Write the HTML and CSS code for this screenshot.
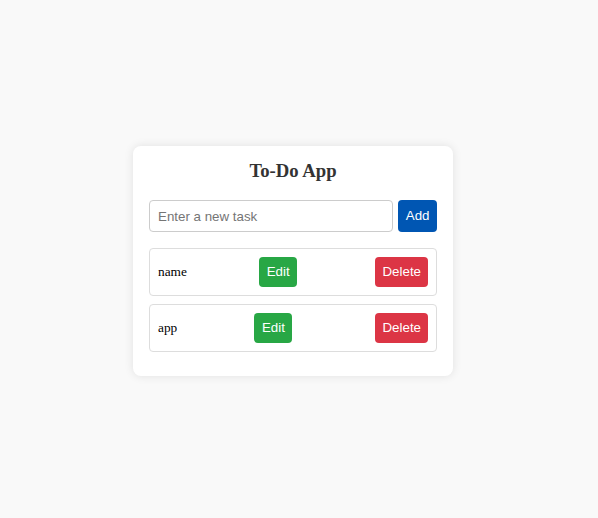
FILE: index.html
```html
<!DOCTYPE html>
<html>
<head>
<meta charset="utf-8">
<title>To-Do App</title>
<link rel="stylesheet" href="styles.css">
</head>
<body>
  <div class="card">
    <h3 class="title">To-Do App</h3>
    <div class="add-row">
      <input class="task-input" type="text" placeholder="Enter a new task">
      <button class="btn btn-add">Add</button>
    </div>
    <ul class="list">
      <li class="item"><span class="item-text">name</span><button class="btn btn-edit">Edit</button><button class="btn btn-delete">Delete</button></li>
      <li class="item"><span class="item-text">app</span><button class="btn btn-edit">Edit</button><button class="btn btn-delete">Delete</button></li>
    </ul>
  </div>
</body>
</html>
```
FILE: styles.css
```css
* { box-sizing: border-box; }
html, body { height: 100%; }
body {
  margin: 0;
  background: #f9f9f9;
  display: flex;
  justify-content: center;
  align-items: center;
  padding: 4px 12px 0 0;
  font-family: "Liberation Serif", "Times New Roman", serif;
}
.card {
  width: 320px;
  background: #fff;
  border-radius: 8px;
  padding: 14px 16px 16px;
  box-shadow: 0 0 10px rgba(0, 0, 0, 0.1);
}
.title {
  margin: 0 0 18px;
  text-align: center;
  font-size: 18.72px;
  font-weight: bold;
  color: #333;
  font-family: "Liberation Serif", "Times New Roman", serif;
}
.add-row {
  display: flex;
  gap: 5px;
}
.task-input {
  flex: 1;
  min-width: 0;
  height: 32px;
  padding: 0 8px;
  border: 1px solid #ccc;
  border-radius: 4px;
  font-family: "Liberation Sans", Arial, sans-serif;
  font-size: 13.333px;
  color: #333;
  outline: none;
}
.task-input::placeholder { color: #757575; }
.btn {
  border: none;
  border-radius: 4px;
  color: #fff;
  font-family: "Liberation Sans", Arial, sans-serif;
  font-size: 13.333px;
  padding: 7px;
  line-height: 16px;
  cursor: pointer;
}
.btn-add { background: #0056b3; padding: 0 7.5px; }
.btn-edit { background: #28a745; padding: 7px 7.5px; margin-right: 6px; }
.btn-delete { background: #dc3545; }
.list {
  list-style: none;
  margin: 16px 0 0;
  padding: 0;
}
.item {
  display: flex;
  justify-content: space-between;
  align-items: center;
  border: 1px solid #ddd;
  border-radius: 4px;
  padding: 8px;
  margin-bottom: 8px;
  font-size: 13.333px;
  color: #000;
}
```
